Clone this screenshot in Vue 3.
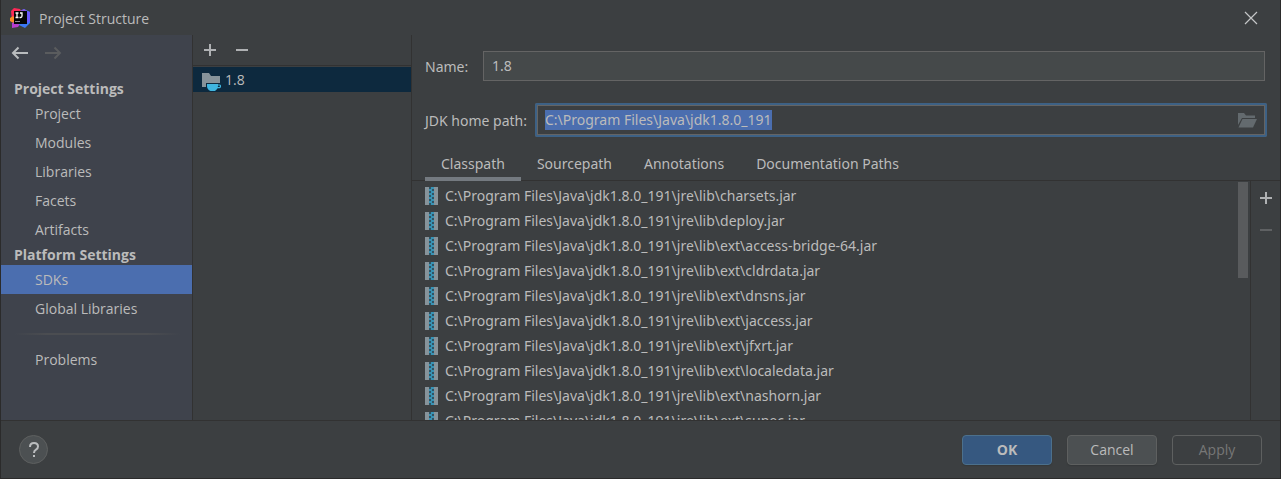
<script setup>
import { onMounted, ref } from 'vue'

const groups = [
  { title: 'Project Settings', items: ['Project', 'Modules', 'Libraries', 'Facets', 'Artifacts'] },
  { title: 'Platform Settings', items: ['SDKs', 'Global Libraries'] },
]
const section = ref('SDKs')
const tabs = ['Classpath', 'Sourcepath', 'Annotations', 'Documentation Paths']
const tab = ref('Classpath')
const sdkName = ref('1.8')
const home = ref('C:\\Program Files\\Java\\jdk1.8.0_191')
const jars = [
  'charsets.jar',
  'deploy.jar',
  'ext\\access-bridge-64.jar',
  'ext\\cldrdata.jar',
  'ext\\dnsns.jar',
  'ext\\jaccess.jar',
  'ext\\jfxrt.jar',
  'ext\\localedata.jar',
  'ext\\nashorn.jar',
  'ext\\sunec.jar',
]
const homeInput = ref(null)

onMounted(() => {
  homeInput.value.focus()
  homeInput.value.select()
})
</script>

<template>
  <div class="dialog">
    <header class="titlebar">
      <svg class="logo" width="20" height="20" viewBox="0 0 20 20" aria-hidden="true">
        <path d="M1 3 4 0l6 1 2 4-4 10-6-2z" fill="#fe2857" />
        <path d="M0 10l3-2 2 2v6l-5-3z" fill="#fb8a27" />
        <path d="M2 15l3-1 5 2-2 3-6 1z" fill="#b83dce" />
        <path d="M10 3l4-2 6 3v11l-5 5-6-3z" fill="#3b78f5" />
        <path d="M10 3l4-2 4 3z" fill="#8a52dc" />
        <path d="M17 3l3 1v9l-3 2z" fill="#6b57ff" />
        <rect x="4" y="3" width="13" height="13" fill="#050507" />
        <path d="M5.500 5h3M7 5v4.500M5.500 9.500h3M10 5h2v3q0 1.500-1.500 1.500H9.500" fill="none" stroke="#fff" stroke-width="1.300" />
        <path d="M5 13.500h5" stroke="#8d8d8f" stroke-width="1" />
      </svg>
      <h1>Project Structure</h1>
      <button class="close" aria-label="Close">
        <svg width="14" height="14" viewBox="0 0 14 14"><path d="M1 1l12 12M13 1 1 13" stroke="#c4c6c7" stroke-width="1.200" /></svg>
      </button>
    </header>

    <main class="body">
      <nav class="sidebar">
        <div class="history">
          <button aria-label="Back">
            <svg width="18" height="14" viewBox="0 0 18 14"><path d="M17 7H2M7.500 1.500 2 7l5.500 5.500" fill="none" stroke="#b9bcbe" stroke-width="2" /></svg>
          </button>
          <button aria-label="Forward" disabled>
            <svg width="18" height="14" viewBox="0 0 18 14"><path d="M1 7h15M10.500 1.500 16 7l-5.500 5.500" fill="none" stroke="#5a5c5e" stroke-width="2" /></svg>
          </button>
        </div>
        <template v-for="g in groups" :key="g.title">
          <h2>{{ g.title }}</h2>
          <a
            v-for="item in g.items"
            :key="item"
            href="#"
            :class="{ active: section === item }"
            @click.prevent="section = item"
          >{{ item }}</a>
        </template>
        <hr />
        <a href="#" :class="{ active: section === 'Problems' }" @click.prevent="section = 'Problems'">Problems</a>
      </nav>

      <section class="sdks">
        <div class="tools">
          <button aria-label="Add SDK">
            <svg width="14" height="14" viewBox="0 0 14 14"><path d="M7 1v12M1 7h12" stroke="#afb1b3" stroke-width="2" /></svg>
          </button>
          <button aria-label="Remove SDK">
            <svg width="14" height="14" viewBox="0 0 14 14"><path d="M1 7h12" stroke="#afb1b3" stroke-width="2" /></svg>
          </button>
        </div>
        <ul>
          <li class="sdk">
            <svg width="19" height="18" viewBox="0 0 19 18" aria-hidden="true">
              <path d="M0 0h7l2 3h9v7H4v4H0z" fill="#87939a" />
              <path d="M5 11h11v2q0 3-3 5H8.500Q5 16.500 5 13z" fill="#40b6e0" />
              <path d="M15 12h2.500q1 0 1 1.200t-1 1.500H15" fill="none" stroke="#40b6e0" stroke-width="1.200" />
            </svg>
            <span>1.8</span>
          </li>
        </ul>
      </section>

      <section class="editor">
        <div class="field name">
          <label for="sdk-name">Name:</label>
          <div class="box"><input id="sdk-name" v-model="sdkName" type="text" /></div>
        </div>
        <div class="field path">
          <label for="sdk-home">JDK home path:</label>
          <div class="box">
            <input id="sdk-home" ref="homeInput" v-model="home" type="text" spellcheck="false" />
            <button aria-label="Browse">
              <svg width="20" height="15" viewBox="0 0 20 15"><path d="M0 0h6l2 2.500h9V5H4L0 12z" fill="#636a6e" /><path d="M4.500 6H19l-4 8.500H.5z" fill="#636a6e" /></svg>
            </button>
          </div>
        </div>
        <div class="tabs" role="tablist">
          <button
            v-for="t in tabs"
            :key="t"
            role="tab"
            :aria-selected="tab === t"
            :class="{ on: tab === t }"
            @click="tab = t"
          >{{ t }}</button>
        </div>
        <div class="roots">
          <ul class="jars">
            <li v-for="j in jars" :key="j">
              <svg width="13" height="18" viewBox="0 0 13 18" aria-hidden="true">
                <path d="M0 0h4v18H0zM9 0h4v18H9z" fill="#87939a" />
                <path d="M4 0h5v18H4z" fill="#2f5364" />
                <path d="M6 1h3M4 3h3M6 5h3M4 7h3M6 9h3M4 11h3M6 13h3M4 15h3M6 17h3" stroke="#3da9d0" stroke-width="1.300" />
              </svg>
              <span>C:\Program Files\Java\jdk1.8.0_191\jre\lib\{{ j }}</span>
            </li>
          </ul>
          <div class="track"><div class="thumb"></div></div>
          <div class="side">
            <button aria-label="Add path">
              <svg width="14" height="14" viewBox="0 0 14 14"><path d="M7 1v12M1 7h12" stroke="#afb1b3" stroke-width="2" /></svg>
            </button>
            <button aria-label="Remove path" disabled>
              <svg width="14" height="14" viewBox="0 0 14 14"><path d="M1 7h12" stroke="#5f6163" stroke-width="2" /></svg>
            </button>
          </div>
        </div>
      </section>
    </main>

    <footer>
      <button class="help" aria-label="Help">
        <svg width="12" height="16" viewBox="0 0 12 16"><path d="M2 5q0-4 4-4t4 3.500q0 2-2 3.200T6 11" fill="none" stroke="#bbbdbf" stroke-width="2" /><path d="M5 13h2v2H5z" fill="#bbbdbf" /></svg>
      </button>
      <div class="actions">
        <button class="btn primary">OK</button>
        <button class="btn">Cancel</button>
        <button class="btn" disabled>Apply</button>
      </div>
    </footer>
  </div>
</template>

<style>
body {
  background: #3c3f41;
}
</style>

<style scoped>
.dialog,
.dialog * {
  box-sizing: border-box;
}
.dialog {
  display: flex;
  flex-direction: column;
  height: 100vh;
  border: solid #2b2b2b;
  border-width: 0 1px 1px;
  background: #3c3f41;
  color: #bbbbbb;
  font: 14px/20px "Open Sans", "Noto Sans", sans-serif;
}
button {
  margin: 0;
  padding: 0;
  border: 0;
  background: none;
  color: inherit;
  font: inherit;
}
svg {
  display: block;
  flex: none;
}
h1,
h2,
ul {
  margin: 0;
  padding: 0;
  list-style: none;
}
.titlebar {
  display: flex;
  flex: none;
  align-items: center;
  gap: 9px;
  height: 35px;
  padding: 0 22px 0 9px;
}
h1 {
  flex: 1;
  font-size: 14px;
  font-weight: 400;
  line-height: 20px;
  padding-top: 2px;
}
.body {
  display: flex;
  flex: 1;
  min-height: 0;
}
.sidebar {
  display: flex;
  flex: none;
  flex-direction: column;
  width: 192px;
  border-right: 1px solid #323232;
  background: #3f434c;
}
.history {
  display: flex;
  flex: none;
  align-items: center;
  gap: 15px;
  height: 36px;
  margin-bottom: 7px;
  padding-left: 10px;
}
h2 {
  height: 21px;
  padding-left: 13px;
  font-size: 14px;
  font-weight: 700;
  line-height: 21px;
}
.sidebar a {
  padding-left: 34px;
  color: inherit;
  line-height: 29px;
  text-decoration: none;
}
.sidebar a.active {
  background: #4b6eaf;
}
hr {
  width: 166px;
  height: 2px;
  margin: 10px 0 10px 13px;
  border: 0;
  background: linear-gradient(90deg, #3f434c, #4b4d51 20%, #4b4d51 80%, #3f434c);
}
.sdks {
  flex: none;
  width: 219px;
  border-right: 1px solid #323232;
}
.tools {
  display: flex;
  align-items: center;
  gap: 18px;
  height: 31px;
  margin-bottom: 1px;
  padding-left: 10px;
  border-bottom: 1px solid #323232;
}
.sdk {
  display: flex;
  align-items: center;
  gap: 4px;
  height: 25px;
  padding-left: 9px;
  background: #0d293e;
}
.sdk svg {
  margin-top: 4px;
}
.editor {
  display: flex;
  flex: 1;
  flex-direction: column;
  min-width: 0;
  font-family: "Noto Sans", "Open Sans", sans-serif;
}
.field {
  display: flex;
  flex: none;
  align-items: center;
  padding-left: 13px;
}
.field label {
  padding-top: 2px;
  white-space: nowrap;
}
.box {
  display: flex;
  flex: 1;
  align-items: center;
  height: 30px;
  border: 1px solid #646464;
}
.name {
  padding-right: 15px;
  margin-top: 16px;
}
.name label {
  width: 58px;
}
.name .box {
  background: #45494a;
}
.path {
  margin-top: 22px;
  padding-right: 13px;
}
.path label {
  width: 110px;
}
.path .box {
  height: 34px;
  border: 0;
  border-radius: 2px;
  box-shadow: inset 0 0 0 2px #3d6185, inset 0 0 0 3px #646464;
  padding-right: 9px;
}
input {
  flex: 1;
  min-width: 0;
  height: 20px;
  padding: 0 8px;
  border: 0;
  outline: 0;
  background: none;
  color: inherit;
  caret-color: transparent;
  font: inherit;
}
.path input {
  padding-left: 10px;
}
input::selection {
  background: #4b6eaf;
  color: #bbbbbb;
}
.tabs {
  display: flex;
  flex: none;
  height: 44px;
  padding: 12px 0 0 13px;
  border-bottom: 1px solid #323232;
}
.tabs button {
  height: 32px;
  padding: 5px 16px 3px;
  border-bottom: 4px solid transparent;
}
.tabs .on {
  border-color: #747a80;
}
.roots {
  display: flex;
  flex: 1;
  min-height: 0;
}
.jars {
  flex: 1;
  min-width: 0;
  padding: 2px 0 0 13px;
  overflow: hidden;
}
.jars li {
  display: flex;
  align-items: center;
  gap: 7px;
  height: 25px;
  white-space: nowrap;
}
.track {
  width: 13px;
  padding: 1px 2px 0 1px;
}
.thumb {
  height: 96px;
  background: #595b5d;
}
.side {
  display: flex;
  flex-direction: column;
  align-items: center;
  gap: 18px;
  width: 30px;
  padding-top: 10px;
  border-left: 1px solid #323232;
}
footer {
  display: flex;
  flex: none;
  align-items: center;
  justify-content: space-between;
  height: 58px;
  padding: 0 18px;
  border-top: 1px solid #323232;
}
.help {
  display: grid;
  place-items: center;
  width: 29px;
  height: 29px;
  border: 1px solid #5e6060;
  border-radius: 50%;
  background: #4c5052;
}
.actions {
  display: flex;
  gap: 15px;
}
.btn {
  width: 90px;
  height: 30px;
  border: 1px solid #5e6060;
  border-radius: 4px;
  background: #4c5052;
  box-shadow: 0 1px 1px #35383a;
}
.primary {
  border-color: #4c708c;
  background: #365880;
  font-weight: 700;
}
.btn:disabled {
  background: none;
  box-shadow: none;
  color: #777777;
}
</style>
